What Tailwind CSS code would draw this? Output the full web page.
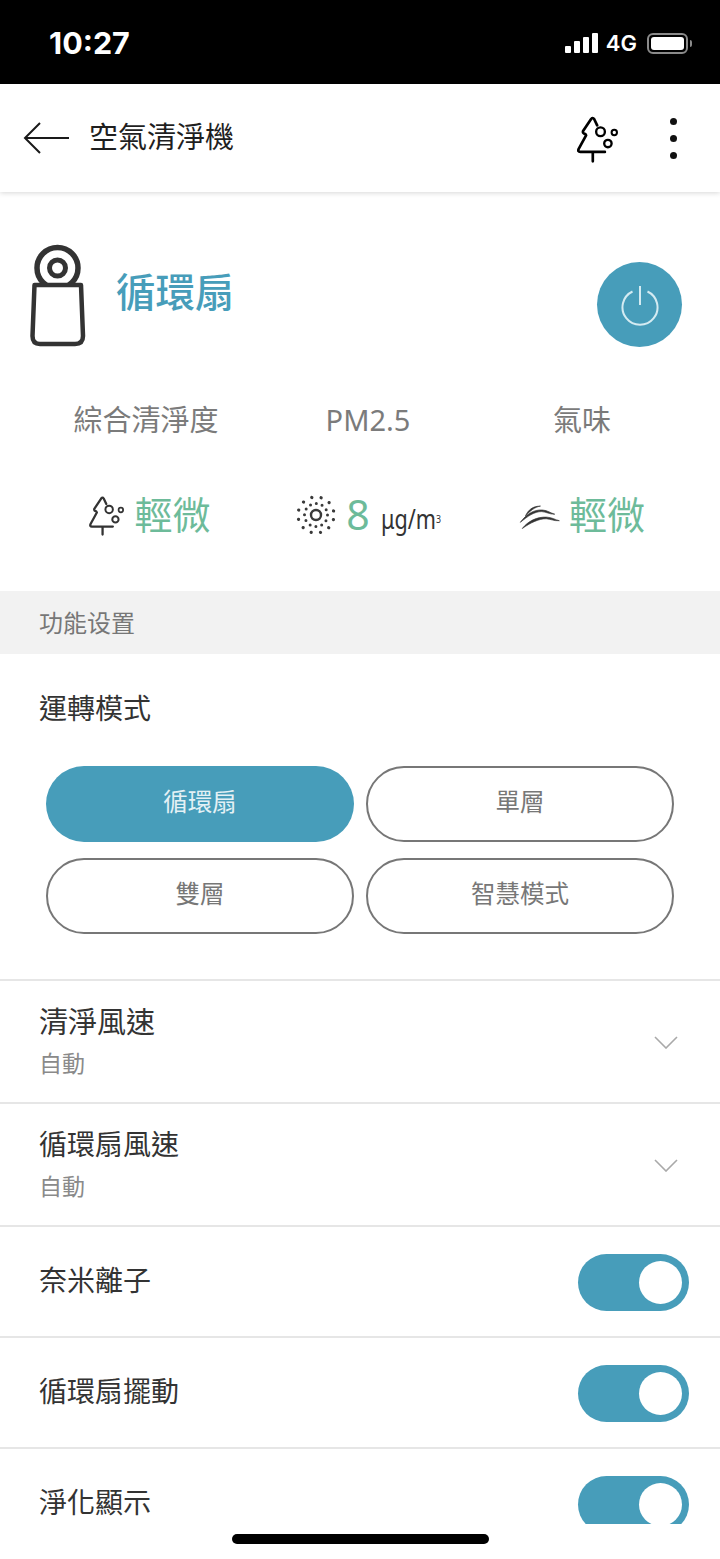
<!doctype html>
<html lang="zh-Hant">
<head>
<meta charset="utf-8">
<meta name="viewport" content="width=device-width, initial-scale=1">
<script src="https://cdn.jsdelivr.net/npm/@tailwindcss/browser@4"></script>
<title>空氣清淨機</title>
</head>
<body class="bg-white">
<svg width="0" height="0" class="absolute">
  <symbol id="tree" viewBox="50 45 125 140">
    <path d="M110 73 L101 54 Q97 48 92 54 L68 90 Q66 97 75 99 L77 103 L55 143 Q51 152 60 152 H133 M97 152 V180" fill="none" stroke="currentColor" stroke-width="8" stroke-linecap="round" stroke-linejoin="round"/>
    <circle cx="120" cy="92" r="13" fill="none" stroke="currentColor" stroke-width="7"/>
    <circle cx="161" cy="94" r="8" fill="none" stroke="currentColor" stroke-width="6"/>
    <circle cx="142" cy="127" r="11" fill="none" stroke="currentColor" stroke-width="7"/>
  </symbol>
  <symbol id="chevron" viewBox="0 0 24 13">
    <path d="M1 1 L12 12 L23 1" fill="none" stroke="#a9a9a9" stroke-width="1.6"/>
  </symbol>
</svg>

<div class="w-[720px] h-[1559px] flex flex-col overflow-hidden font-['Noto_Sans','Noto_Sans_CJK_TC',sans-serif]">
  <!-- status bar -->
  <div class="h-[84px] shrink-0 bg-black text-white flex items-center justify-between pl-[49px] pr-[28px] pt-[2px]">
    <span class="font-['Inter',sans-serif] font-bold text-[30.5px] leading-none">10:27</span>
    <div class="flex items-center">
      <div class="flex items-end gap-[3px] h-[20px]">
        <div class="w-[6px] h-[7px] bg-white rounded-[1px]"></div>
        <div class="w-[6px] h-[12px] bg-white rounded-[1px]"></div>
        <div class="w-[6px] h-[16px] bg-white rounded-[1px]"></div>
        <div class="w-[6px] h-[20px] bg-white rounded-[1px]"></div>
      </div>
      <span class="ml-[8px] font-['Inter',sans-serif] font-semibold text-[22px] leading-none">4G</span>
      <div class="ml-[10px] w-[41px] h-[21px] border-2 border-[#8a8a8a] rounded-[6px] p-[2px]">
        <div class="w-full h-full bg-white rounded-[3px]"></div>
      </div>
      <div class="w-[2px] h-[7px] bg-[#8a8a8a] rounded-r-sm ml-[2px]"></div>
    </div>
  </div>

  <!-- title bar -->
  <div class="h-[108px] shrink-0 bg-white shadow-[0_1px_5px_rgba(0,0,0,0.16)] relative flex items-center pl-[23px] pr-[43px] pb-[3px]">
    <svg width="47" height="34" viewBox="0 0 47 34" class="shrink-0 mt-[3px]"><path d="M46 17 H2 M17 2 L2 17 L17 32" fill="none" stroke="#1a1a1a" stroke-width="2"/></svg>
    <span class="ml-[19px] text-[29px] leading-none text-[#1f1f1f]">空氣清淨機</span>
    <svg width="42" height="47" class="ml-auto mt-[5px] text-black"><use href="#tree"/></svg>
    <div class="ml-[51px] mt-[3px] flex flex-col gap-[10px]">
      <div class="w-[7px] h-[7px] rounded-full bg-[#111]"></div>
      <div class="w-[7px] h-[7px] rounded-full bg-[#111]"></div>
      <div class="w-[7px] h-[7px] rounded-full bg-[#111]"></div>
    </div>
  </div>

  <div class="h-[1332px] shrink-0 overflow-hidden">
    <!-- device -->
    <div class="h-[399px] flex flex-col">
      <div class="flex items-start pl-[30px] pr-[38px] pt-[52px]">
        <svg width="56" height="104" viewBox="0 0 56 104" class="shrink-0 text-[#333]">
          <circle cx="27.5" cy="24" r="20.5" fill="none" stroke="currentColor" stroke-width="5.5"/>
          <circle cx="27.5" cy="24" r="8" fill="none" stroke="currentColor" stroke-width="5"/>
          <path d="M4.5 41 H51 L53 92 Q53 100 45 100 H10 Q2.5 100 2.5 92 Z" fill="#fff" stroke="currentColor" stroke-width="4.5" stroke-linejoin="round"/>
        </svg>
        <span class="ml-[30px] mt-[29px] text-[39.5px] leading-none font-medium text-[#479dba]">循環扇</span>
        <div class="ml-auto mt-[18px] w-[85px] h-[85px] rounded-full bg-[#479dba] flex items-center justify-center">
          <svg width="40" height="44" viewBox="0 0 40 44" class="mt-[4px]"><path d="M20 1 V20 M12.5 6.5 A17.5 17.5 0 1 0 27.5 6.5" fill="none" stroke="#d4ebf2" stroke-width="2"/></svg>
        </div>
      </div>

      <div class="grid grid-cols-[292px_152px_276px] mt-[57px] text-[29px] leading-none text-[#7b7b7b] text-center">
        <span>綜合清淨度</span>
        <span>PM2.5</span>
        <span>氣味</span>
      </div>

      <div class="grid grid-cols-[292px_152px_276px] mt-[57px] items-center h-[46px]">
        <div class="flex items-center justify-center pl-[8px] gap-[9px]">
          <svg width="36" height="40" class="shrink-0 mt-[4px] text-[#333]"><use href="#tree"/></svg>
          <span class="text-[38px] leading-none text-[#6dbb9a]">輕微</span>
        </div>
        <div class="flex items-center justify-center whitespace-nowrap">
          <svg width="42" height="42" viewBox="0 0 42 42" class="shrink-0 text-[#3a3a3a] mt-[2px]">
            <circle cx="21" cy="21" r="5" fill="none" stroke="currentColor" stroke-width="2.4"/>
            <circle cx="21" cy="21" r="11.5" fill="none" stroke="currentColor" stroke-width="3" stroke-linecap="round" stroke-dasharray="0 6.02"/>
            <circle cx="21" cy="21" r="18" fill="none" stroke="currentColor" stroke-width="3.2" stroke-linecap="round" stroke-dasharray="0 9.42" transform="rotate(15 21 21)"/>
          </svg>
          <span class="ml-[9px] text-[41px] leading-none text-[#6dbb9a]">8</span>
          <span class="ml-[11px] w-[60px] mt-[8px] text-[27px] leading-none text-[#333] origin-left scale-x-[0.8] inline-block">μg/m<sup class="text-[11px]">3</sup></span>
        </div>
        <div class="flex items-center justify-center gap-[9px]">
          <svg width="41" height="27" viewBox="28 52 126 80" class="shrink-0 text-[#333] mt-[4px]">
            <path d="M48 90 C56 72 70 60 94 60 C76 63 62 75 48 90 Z" fill="currentColor" stroke="currentColor" stroke-width="2" stroke-linejoin="round"/>
            <path d="M32 110 C50 86 72 70 100 72 C116 73 124 81 138 85 C120 85 112 78 98 77 C76 76 54 92 32 110 Z" fill="currentColor" stroke="currentColor" stroke-width="2" stroke-linejoin="round"/>
            <path d="M38 129 C56 106 84 92 114 94 C130 95 140 102 152 105 C134 106 126 100 112 99 C90 98 62 112 38 129 Z" fill="currentColor" stroke="currentColor" stroke-width="2" stroke-linejoin="round"/>
          </svg>
          <span class="text-[38px] leading-none text-[#6dbb9a]">輕微</span>
        </div>
      </div>
    </div>

    <!-- section band -->
    <div class="h-[63px] bg-[#f2f2f2] flex items-center pl-[39px] text-[24px] leading-none text-[#777]">功能设置</div>

    <!-- mode -->
    <div class="h-[327px] px-[46px] border-b-2 border-[#e6e6e6]">
      <div class="pt-[40px] -ml-[7px] text-[28px] leading-none text-[#333]">運轉模式</div>
      <div class="grid grid-cols-[308px_308px] gap-x-[12px] gap-y-[16px] mt-[44px] text-[24.5px] leading-none">
        <div class="h-[76px] pb-[4px] rounded-full bg-[#479dba] text-[#e4f1f5] flex items-center justify-center">循環扇</div>
        <div class="h-[76px] pb-[4px] rounded-full border-2 border-[#777] text-[#777] flex items-center justify-center">單層</div>
        <div class="h-[76px] pb-[4px] rounded-full border-2 border-[#777] text-[#777] flex items-center justify-center">雙層</div>
        <div class="h-[76px] pb-[4px] rounded-full border-2 border-[#777] text-[#777] flex items-center justify-center">智慧模式</div>
      </div>
    </div>

    <!-- wind rows -->
    <div class="h-[123px] border-b-2 border-[#e6e6e6] flex items-center justify-between pl-[39px] pr-[42px] pb-[2px]">
      <div class="flex flex-col">
        <span class="text-[29px] leading-none text-[#333]">清淨風速</span>
        <span class="mt-[16px] text-[23px] leading-none text-[#8a8a8a]">自動</span>
      </div>
      <svg width="24" height="13" class="mt-[4px]"><use href="#chevron"/></svg>
    </div>
    <div class="h-[123px] border-b-2 border-[#e6e6e6] flex items-center justify-between pl-[39px] pr-[42px] pb-[2px]">
      <div class="flex flex-col">
        <span class="text-[28px] leading-none text-[#333]">循環扇風速</span>
        <span class="mt-[17px] text-[23px] leading-none text-[#8a8a8a]">自動</span>
      </div>
      <svg width="24" height="13" class="mt-[4px]"><use href="#chevron"/></svg>
    </div>

    <!-- toggles -->
    <div class="h-[111px] border-b-2 border-[#e6e6e6] flex items-start justify-between pl-[39px] pr-[31px] pt-[27px]">
      <span class="mt-[12px] text-[28px] leading-none text-[#333]">奈米離子</span>
      <div class="w-[111px] h-[57px] rounded-full bg-[#479dba] flex items-center justify-end pr-[7px]">
        <div class="w-[43px] h-[43px] rounded-full bg-white"></div>
      </div>
    </div>
    <div class="h-[111px] border-b-2 border-[#e6e6e6] flex items-start justify-between pl-[39px] pr-[31px] pt-[27px]">
      <span class="mt-[12px] text-[28px] leading-none text-[#333]">循環扇擺動</span>
      <div class="w-[111px] h-[57px] rounded-full bg-[#479dba] flex items-center justify-end pr-[7px]">
        <div class="w-[43px] h-[43px] rounded-full bg-white"></div>
      </div>
    </div>
    <div class="h-[111px] flex items-start justify-between pl-[39px] pr-[31px] pt-[27px]">
      <span class="mt-[12px] text-[28px] leading-none text-[#333]">淨化顯示</span>
      <div class="w-[111px] h-[57px] rounded-full bg-[#479dba] flex items-center justify-end pr-[7px]">
        <div class="w-[43px] h-[43px] rounded-full bg-white"></div>
      </div>
    </div>
  </div>

  <!-- home indicator -->
  <div class="flex-1 flex justify-center pt-[10px]">
    <div class="w-[257px] h-[10px] rounded-full bg-black"></div>
  </div>
</div>
</body>
</html>
